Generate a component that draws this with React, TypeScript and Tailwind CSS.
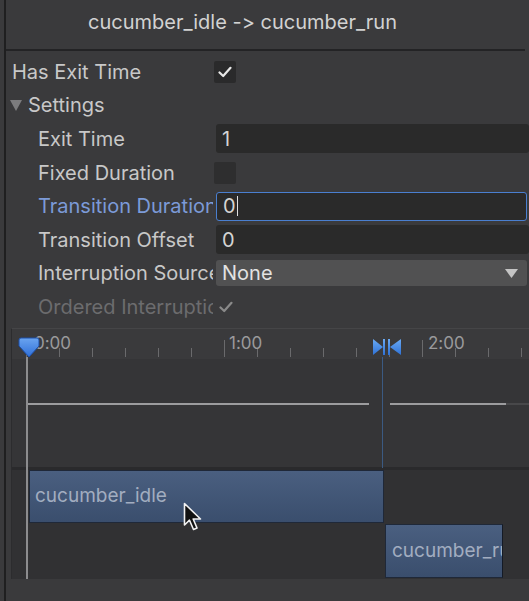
const font = { fontFamily: 'Inter, "Noto Sans", sans-serif', fontFeatureSettings: '"calt" 0, "liga" 0' };

function Check({ dim = false }: { dim?: boolean }) {
  return (
    <svg width="14" height="12" viewBox="0 0 14 12">
      <path d="M1.5 6.5 L5.2 10 L12.5 1.8" fill="none" stroke={dim ? '#8a8a8a' : '#e8e8e8'} strokeWidth="2.2" strokeLinecap="round" strokeLinejoin="round" />
    </svg>
  );
}

function Row({ label, labelClass = 'text-[#c8c8c8]', indent = true, children }: { label: string; labelClass?: string; indent?: boolean; children?: React.ReactNode }) {
  return (
    <div className="flex h-[33.6px] items-center">
      <div className={`w-[207px] shrink-0 overflow-hidden whitespace-nowrap ${indent ? 'pl-[32px]' : 'pl-[6px]'} ${labelClass}`}>{label}</div>
      <div className="flex h-full flex-1 items-center">{children}</div>
    </div>
  );
}

function Field({ value, focused = false }: { value: string; focused?: boolean }) {
  return (
    <div
      className={`ml-[3px] flex h-[29px] flex-1 items-center rounded-[3px] bg-[#2a2a2a] pl-[6px] text-[#d4d4d4] ${focused ? 'mr-[2px] border border-[#4a7fd0] pl-[5px]' : ''}`}
    >
      {value}
      {focused && <span className="ml-[1px] h-[20px] w-[1px] bg-[#e0e0e0]" />}
    </div>
  );
}

const ticks = Array.from({ length: 16 }, (_, i) => 26 + i * 33);

export default function App() {
  return (
    <div className="flex h-[601px] w-[529px] overflow-hidden bg-[#3a3a3c] text-[20px]" style={font}>
      <div className="w-[4px] shrink-0" />
      <div className="w-[2px] shrink-0 bg-[#1f1f20]" />
      <div className="flex min-w-0 flex-1 flex-col">
        {/* header */}
        <div className="flex h-[49px] items-center pb-[5px] pl-[82px] text-[#d2d2d2]">cucumber_idle -&gt; cucumber_run</div>
        <div className="mr-[4px] h-[2px] bg-[#232325]" />

        {/* settings */}
        <div className="flex flex-col pt-[4px]">
          <Row label="Has Exit Time" indent={false}>
            <div className="ml-[1px] flex h-[22px] w-[22px] items-center justify-center rounded-[2px] bg-[#2a2a2b]">
              <Check />
            </div>
          </Row>
          <div className="flex h-[33.6px] items-center gap-[6px] pl-[4px] text-[#c8c8c8]">
            <svg width="12" height="11" viewBox="0 0 12 11">
              <path d="M0 0 H12 L6 11 Z" fill="#7c7c7e" />
            </svg>
            Settings
          </div>
          <Row label="Exit Time">
            <Field value="1" />
          </Row>
          <Row label="Fixed Duration">
            <div className="ml-[1px] h-[22px] w-[22px] rounded-[2px] bg-[#2e2e2f]" />
          </Row>
          <Row label="Transition Duration" labelClass="text-[#7c9ad8]">
            <Field value="0" focused />
          </Row>
          <Row label="Transition Offset">
            <Field value="0" />
          </Row>
          <Row label="Interruption Source">
            <div className="ml-[3px] mr-[2px] flex h-[26px] flex-1 items-center justify-between rounded-[3px] bg-[#515152] pl-[6px] pr-[9px] text-[#e2e2e2]">
              None
              <svg width="13" height="9" viewBox="0 0 13 9">
                <path d="M0 0 H13 L6.5 9 Z" fill="#c4c4c4" />
              </svg>
            </div>
          </Row>
          <Row label="Ordered Interruption" labelClass="text-[#6c6c6e]">
            <div className="pl-[6px]">
              <Check dim />
            </div>
          </Row>
        </div>

        {/* timeline */}
        <div className="mt-[4px] flex flex-1 flex-col">
          <div className="relative ml-[5px] flex flex-1 flex-col border-l border-t border-[#2c2c2e] border-t-[#454547]">
            {/* ruler */}
            <div className="relative h-[30px] shrink-0 bg-[#3a3a3c] text-[17px] text-[#9a9a9c]">
              {ticks.map((x, i) => (
                <div
                  key={x}
                  className={`absolute bottom-[2px] w-[1px] bg-[#6a6a6c] ${i % 6 === 0 ? 'h-[17px]' : 'h-[9px]'}`}
                  style={{ left: x - 12 }}
                />
              ))}
              <span className="absolute left-[22px] top-[2px]">0:00</span>
              <span className="absolute left-[217px] top-[2px]">1:00</span>
              <span className="absolute left-[416px] top-[2px]">2:00</span>
            </div>
            {/* curve area */}
            <div className="relative h-[108px] shrink-0 bg-[#353537]">
              <div className="absolute left-[14px] top-[44px] h-[2px] w-[343px] bg-[#9c9c9e]" />
              <div className="absolute left-[378px] top-[44px] h-[2px] w-[116px] bg-[#9c9c9e]" />
              <div className="absolute left-[494px] top-[44px] h-[2px] w-[24px] bg-[#48484a]" />
            </div>
            <div className="h-[3px] shrink-0 bg-[#2a2a2c]" />
            {/* tracks */}
            <div className="relative flex-1 bg-[#313133]">
              <div className="absolute left-[17px] top-[0px] flex h-[53px] w-[355px] items-center border border-[#1f2838] bg-gradient-to-b from-[#4a5f80] to-[#3a4e6d] pl-[5px] text-[19px] text-[#a2adc0]">
                cucumber_idle
              </div>
              <div className="absolute left-[373px] top-[54px] flex h-[54px] w-[118px] items-center overflow-hidden whitespace-nowrap border border-[#1f2838] border-r-[#141a26] bg-gradient-to-b from-[#4a5f80] to-[#3a4e6d] pl-[6px] text-[19px] text-[#a2adc0]">
                cucumber_run
              </div>
            </div>

            {/* playhead line */}
            <div className="absolute bottom-0 left-[14px] top-[28px] w-[2px] bg-[#8c8c8e]" />
            {/* transition line */}
            <div className="absolute left-[370px] top-[28px] h-[111px] w-[1px] bg-[#3b5a82]" />

            {/* playhead */}
            <svg className="absolute left-[6px] top-[8px]" width="22" height="21" viewBox="0 0 22 21">
              <defs>
                <linearGradient id="ph" x1="0" y1="0" x2="0" y2="1">
                  <stop offset="0" stopColor="#6aa4f0" />
                  <stop offset="1" stopColor="#2f6fd8" />
                </linearGradient>
              </defs>
              <path d="M3 1 H19 Q21 1 21 3 V9 L11 20 L1 9 V3 Q1 1 3 1 Z" fill="url(#ph)" stroke="#1d4fa8" strokeWidth="1" />
            </svg>

            {/* transition marker */}
            <svg className="absolute left-[360px] top-[9px]" width="30" height="18" viewBox="0 0 30 18">
              <defs>
                <linearGradient id="tm" x1="0" y1="0" x2="0" y2="1">
                  <stop offset="0" stopColor="#6aaaf4" />
                  <stop offset="1" stopColor="#2f72d6" />
                </linearGradient>
              </defs>
              <path d="M1 1 L11 9 L1 17 Z" fill="url(#tm)" />
              <rect x="11" y="1" width="2" height="16" fill="url(#tm)" />
              <rect x="16" y="1" width="2" height="16" fill="url(#tm)" />
              <path d="M29 1 L18 9 L29 17 Z" fill="url(#tm)" />
            </svg>

            {/* mouse cursor */}
            <svg className="absolute left-[171px] top-[173px]" width="22" height="30" viewBox="0 0 22 30">
              <path d="M1.5 1.5 V23 L6.5 18.2 L10.5 27.5 L14 26 L10.2 17 H17.5 Z" fill="#111" stroke="#f2f2f2" strokeWidth="1.6" strokeLinejoin="round" />
            </svg>
          </div>
          <div className="h-[22px] shrink-0 bg-[#3a3a3c]" />
        </div>
      </div>
    </div>
  );
}
